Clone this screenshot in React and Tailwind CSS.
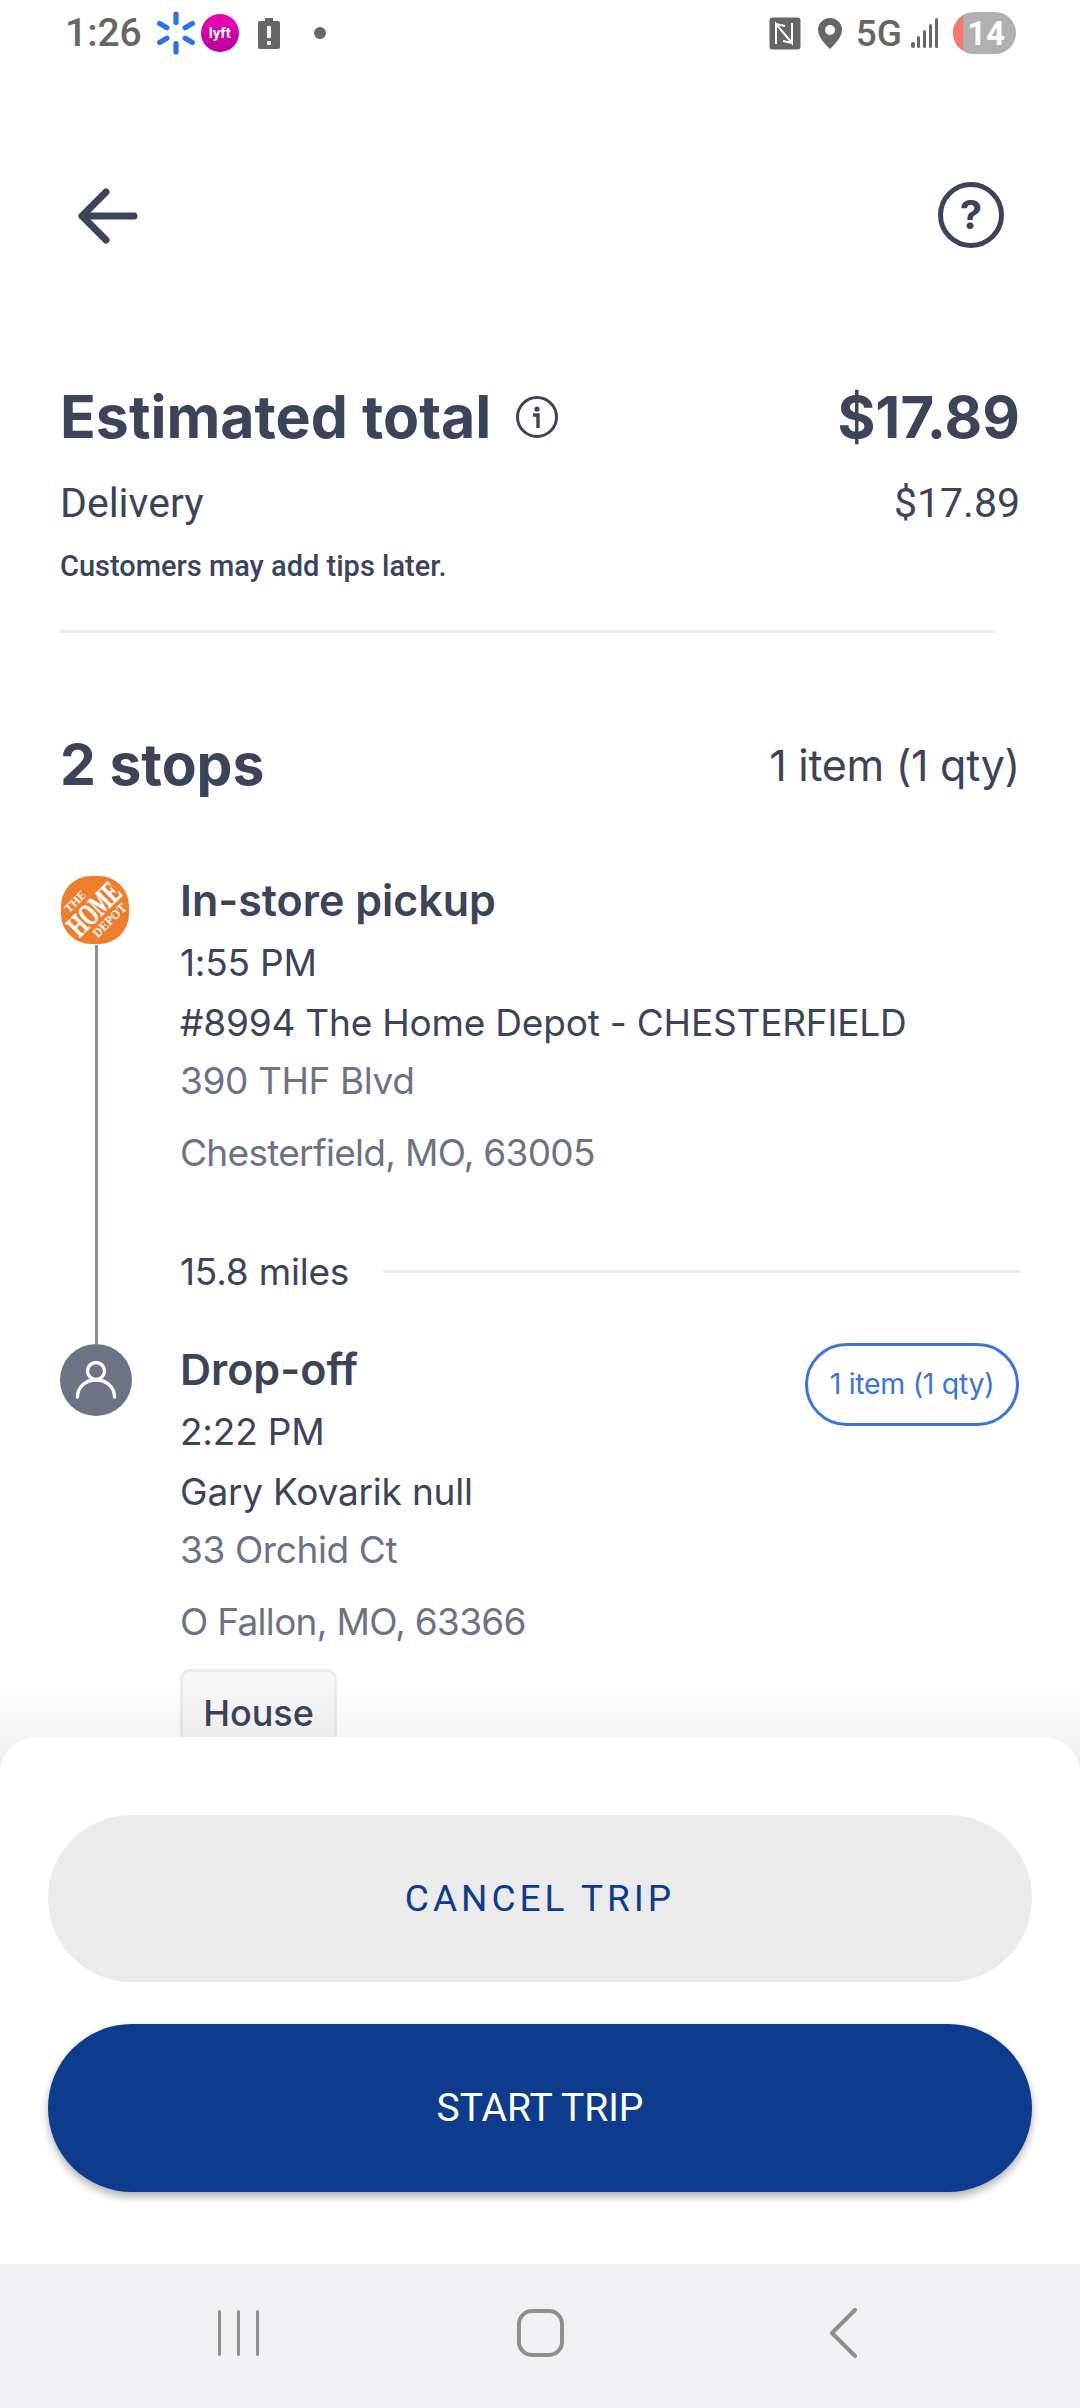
import React from "react";

const ROB = "font-['Roboto',sans-serif]";
const INT = "font-['Inter',sans-serif]";

function Spark() {
  return (
    <svg width="44" height="44" viewBox="-22 -22 44 44" className="ml-[12px]">
      {[0, 60, 120, 180, 240, 300].map((a) => (
        <rect key={a} x="-2.6" y="-21.5" width="5.2" height="13.5" rx="2.6" fill="#2a72ea" transform={`rotate(${a})`} />
      ))}
    </svg>
  );
}

function Logo() {
  return (
    <svg width="70" height="70" viewBox="0 0 70 70" className="block overflow-visible">
      <rect x="1" y="1" width="68" height="68" rx="30" fill="#ee7d2c" />
      <g transform="rotate(-45 35 35)" fill="#fff" fontFamily="'Liberation Serif',serif" fontWeight="700" textAnchor="middle">
        <text x="27" y="19" fontSize="12">THE</text>
        <text x="35" y="44" fontSize="31" textLength="62" lengthAdjust="spacingAndGlyphs" stroke="#fff" strokeWidth="0.6">HOME</text>
        <text x="38" y="57" fontSize="13" textLength="42" lengthAdjust="spacingAndGlyphs">DEPOT</text>
      </g>
    </svg>
  );
}

function Stop({ title, time, name, addr, city, children }) {
  return (
    <div className="relative">
      <div className={`text-[43px] leading-[54px] font-semibold text-[#3b4459] ${INT}`}>{title}</div>
      <div className={`mt-[10px] text-[37px] leading-[51px] text-[#3b4459] ${INT} tracking-[-0.2px]`}>{time}</div>
      <div className={`mt-[9px] text-[37px] leading-[51px] text-[#3b4459] ${INT} tracking-[-0.2px]`}>{name}</div>
      <div className={`mt-[7px] text-[37px] leading-[51px] text-[#6b7385] ${INT} tracking-[-0.4px]`}>{addr}</div>
      <div className={`mt-[21px] text-[37px] leading-[51px] text-[#6b7385] ${INT} tracking-[-0.7px]`}>{city}</div>
      {children}
    </div>
  );
}

export default function App() {
  return (
    <div className="w-[1080px] h-[2408px] bg-white flex flex-col overflow-hidden">
      {/* Status bar */}
      <div className="h-[66px] flex items-center justify-between pl-[65px] pr-[64px] shrink-0">
        <div className="flex items-center">
          <span className={`text-[39px] leading-none font-medium text-[#666666] ${ROB}`}>1:26</span>
          <Spark />
          <div className={`ml-[3px] w-[38px] h-[38px] rounded-full bg-gradient-to-b from-[#f000b8] to-[#b8009a] flex items-center justify-center text-white text-[15px] font-bold ${ROB}`}>lyft</div>
          <svg width="24" height="33" viewBox="0 0 24 33" className="ml-[18px]">
            <path d="M8 1h8v3h5a2 2 0 0 1 2 2v24a2 2 0 0 1-2 2H3a2 2 0 0 1-2-2V6a2 2 0 0 1 2-2h5z" fill="#666" />
            <rect x="10" y="9" width="4" height="12" rx="1" fill="#fff" />
            <rect x="10" y="24" width="4" height="4" rx="1" fill="#fff" />
          </svg>
          <div className="ml-[33px] w-[12px] h-[12px] rounded-full bg-[#666666]" />
        </div>
        <div className="flex items-center">
          <svg width="32" height="33" viewBox="0 0 32 33">
            <rect x="0.5" y="0.5" width="31" height="32" rx="3" fill="#666" />
            <path d="M7 27V7l16 19V6M7 7l9 2M23 26l-9-2" fill="none" stroke="#fff" strokeWidth="2" />
          </svg>
          <svg width="24" height="31" viewBox="0 0 24 31" className="ml-[17px]">
            <path fillRule="evenodd" d="M12 0a12 12 0 0 1 12 12c0 7-7 14-12 19C7 26 0 19 0 12A12 12 0 0 1 12 0zm0 7a5 5 0 1 0 0 10 5 5 0 0 0 0-10z" fill="#666" />
          </svg>
          <span className={`ml-[14px] text-[37px] leading-none font-medium text-[#666666] ${ROB}`}>5G</span>
          <svg width="27" height="30" viewBox="0 0 27 30" className="ml-[9px]">
            <rect x="0" y="24" width="4" height="6" rx="2" fill="#666" />
            <rect x="6" y="18" width="3" height="12" rx="1.5" fill="#666" />
            <rect x="12" y="12" width="3" height="18" rx="1.5" fill="#666" />
            <rect x="18" y="6" width="3" height="24" rx="1.5" fill="#666" />
            <rect x="24" y="0" width="3" height="30" rx="1.5" fill="#666" />
          </svg>
          <div className="ml-[15px] w-[63px] h-[42px] rounded-[21px] bg-[#b0b0b0] overflow-hidden relative flex items-center justify-end pr-[11px]">
            <div className="absolute left-0 top-0 bottom-0 w-[10px] bg-[#f9776c]" />
            <span className={`text-[33px] leading-none font-bold text-white ${ROB}`}>14</span>
          </div>
        </div>
      </div>

      {/* Content */}
      <div className="flex-1 min-h-0 relative overflow-hidden">
        <div className="h-[150px] mt-[123px] flex items-start justify-between pl-[78px] pr-[76px]">
          <svg width="64" height="60" viewBox="0 0 64 60" className="mt-[-3px]">
            <path d="M28 6L4 30L28 54M4 30H56" fill="none" stroke="#3b4459" strokeWidth="7" strokeLinecap="round" strokeLinejoin="round" />
          </svg>
          <svg width="66" height="66" viewBox="0 0 66 66" className="mt-[-7px]">
            <circle cx="33" cy="33" r="30.5" fill="none" stroke="#3b4459" strokeWidth="5" />
            <text x="33" y="47" textAnchor="middle" fontSize="40" fontWeight="700" fill="#3b4459" fontFamily="Inter,sans-serif">?</text>
          </svg>
        </div>

        <div className="pl-[60px] pr-[60px]">
          <div className="flex items-center justify-between mt-[48px] h-[60px]">
            <div className="flex items-center">
              <span className={`text-[59px] leading-[60px] font-bold text-[#3b4459] ${INT}`}>Estimated total</span>
              <svg width="42" height="42" viewBox="0 0 42 42" className="ml-[25px]">
                <circle cx="21" cy="21" r="19.5" fill="none" stroke="#3b4459" strokeWidth="3" />
                <circle cx="21" cy="13" r="2.6" fill="#3b4459" />
                <path d="M17 19h5v13" fill="none" stroke="#3b4459" strokeWidth="3.4" />
              </svg>
            </div>
            <span className={`text-[58px] leading-[60px] font-bold text-[#3b4459] ${INT}`}>$17.89</span>
          </div>
          <div className={`flex items-center justify-between mt-[32px] text-[41px] leading-[48px] text-[#3b4459] ${ROB}`}>
            <span>Delivery</span>
            <span>$17.89</span>
          </div>
          <div className={`mt-[21px] text-[29px] leading-[36px] font-medium text-[#3b4459] ${ROB}`}>Customers may add tips later.</div>
          <div className="mt-[46px] h-[3px] w-[935px] bg-[#ebebeb]" />

          <div className="flex items-center justify-between mt-[102px] h-[60px]">
            <span className={`text-[57px] leading-[60px] font-bold text-[#3b4459] ${INT}`}>2 stops</span>
            <span className={`text-[43px] leading-[48px] text-[#3b4459] ${INT} tracking-[-0.3px]`}>1 item (1 qty)</span>
          </div>

          {/* Timeline */}
          <div className="mt-[80px] flex">
            <div className="w-[120px] shrink-0 flex flex-col items-start">
              <Logo />
              <div className="ml-[35px] w-[3px] h-[399px] bg-[#8790a3]" />
              <div className="w-[72px] h-[72px] rounded-full bg-[#6b7385] flex items-center justify-center">
                <svg width="42" height="42" viewBox="0 0 42 42">
                  <circle cx="21" cy="12" r="8.5" fill="none" stroke="#fff" strokeWidth="3.4" />
                  <path d="M2.5 38c0-10 8-17 18.500-17s18.500 7 18.500 17" fill="none" stroke="#fff" strokeWidth="3.4" strokeLinecap="round" />
                </svg>
              </div>
            </div>
            <div className="flex-1 min-w-0 mt-[-2px]">
              <Stop title="In-store pickup" time="1:55 PM" name="#8994 The Home Depot - CHESTERFIELD" addr="390 THF Blvd" city="Chesterfield, MO, 63005" />
              <div className="flex items-center mt-[68px] h-[51px]">
                <span className={`text-[37px] leading-[51px] text-[#3b4459] ${INT} tracking-[-0.2px]`}>15.8 miles</span>
                <div className="flex-1 ml-[34px] h-[3px] bg-[#ebebeb]" />
              </div>
              <div className="mt-[45px]">
                <Stop title="Drop-off" time="2:22 PM" name="Gary Kovarik null" addr="33 Orchid Ct" city="O Fallon, MO, 63366">
                  <div className={`absolute right-[1px] top-[1px] w-[214px] h-[83px] rounded-[42px] border-[3px] border-[#3b73e0] flex items-center justify-center text-[28.5px] text-[#3b73e0] ${INT} tracking-[-0.3px]`}>1 item (1 qty)</div>
                  <div className={`mt-[22px] w-[157px] h-[100px] border-[3px] border-[#ebebeb] rounded-[10px] bg-[#f7f7f7] pt-[19px] text-center text-[36px] leading-[44px] font-medium text-[#3b4459] ${INT}`}>House</div>
                </Stop>
              </div>
            </div>
          </div>
        </div>
        <div className="absolute left-0 right-0 bottom-0 h-[90px] bg-gradient-to-b from-black/0 to-black/[0.07] pointer-events-none" />
      </div>

      {/* Bottom sheet */}
      <div className="shrink-0 h-[527px] bg-white rounded-t-[36px] mt-[-36px] relative px-[48px] pt-[78px]">
        <div className={`h-[167px] rounded-[84px] bg-[#ebebeb] flex items-center justify-center text-[37px] tracking-[4px] text-[#0d3b8e] ${ROB}`}>CANCEL TRIP</div>
        <div className={`mt-[42px] h-[168px] rounded-[84px] bg-[#0d3b8e] shadow-[0_5px_8px_rgba(0,0,0,0.3)] flex items-center justify-center text-[39px] text-white ${ROB}`}>START TRIP</div>
      </div>

      {/* Nav bar */}
      <div className="shrink-0 h-[144px] bg-[#f1f1f4] flex items-center relative pb-[6px]">
        <div className="pl-[218px] flex gap-[16px] h-[46px]">
          <div className="w-[3px] h-full bg-[#8f8f8f] rounded-full" />
          <div className="w-[3px] h-full bg-[#8f8f8f] rounded-full" />
          <div className="w-[3px] h-full bg-[#8f8f8f] rounded-full" />
        </div>
        <div className="ml-[258px] w-[47px] h-[48px] border-[4px] border-[#8f8f8f] rounded-[15px]" />
        <svg width="30" height="50" viewBox="0 0 30 50" className="ml-[264px]">
          <path d="M27 2L4 25L27 48" fill="none" stroke="#8f8f8f" strokeWidth="4" strokeLinecap="round" strokeLinejoin="round" />
        </svg>
      </div>
    </div>
  );
}
